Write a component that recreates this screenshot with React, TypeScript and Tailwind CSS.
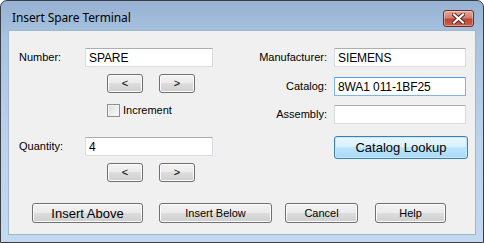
import React from "react";

const ui = "font-['Liberation_Sans',Arial,sans-serif] text-[11px] text-black";

function TextBox({ value, focused }: { value?: string; focused?: boolean }) {
  return (
    <div
      className={`h-[19px] w-full bg-white border px-[3px] flex items-center leading-none ${
        focused
          ? "border-[#7eb4ea] border-t-[#569de5]"
          : "border-[#d9dde3] border-t-[#abadb3]"
      }`}
    >
      <span className="text-[12px] tracking-[-0.1px]">{value}</span>
    </div>
  );
}

function WinButton({
  children,
  className = "",
  big,
}: {
  children: React.ReactNode;
  className?: string;
  big?: boolean;
}) {
  return (
    <div
      className={`flex items-center justify-center rounded-[3px] border border-[#707070] bg-[linear-gradient(to_bottom,#f2f2f2_0%,#ebebeb_50%,#dddddd_50%,#cfcfcf_100%)] shadow-[inset_0_0_0_1px_#fcfcfc] leading-none ${
        big ? "text-[13px]" : "text-[11px]"
      } ${className}`}
    >
      {children}
    </div>
  );
}

function ArrowPair() {
  return (
    <div className="flex gap-[16px] pl-[22px]">
      <WinButton className="w-[36px] h-[19px]">&lt;</WinButton>
      <WinButton className="w-[36px] h-[19px]">&gt;</WinButton>
    </div>
  );
}

function CloseButton() {
  return (
    <div className="w-[31px] h-[17px] rounded-[3px] border border-[#6b2e26] bg-[linear-gradient(to_bottom,#e3a89d_0%,#d27f70_45%,#bf4433_55%,#c8604c_100%)] shadow-[inset_0_0_0_1px_rgba(255,255,255,0.35)] flex items-center justify-center">
      <svg width="13" height="11" viewBox="0 0 13 11">
        <path
          d="M2 1.5 L11 9.5 M11 1.5 L2 9.5"
          stroke="#5a1d16"
          strokeWidth="4"
          strokeLinecap="square"
        />
        <path
          d="M2 1.5 L11 9.5 M11 1.5 L2 9.5"
          stroke="#ffffff"
          strokeWidth="2.2"
          strokeLinecap="square"
        />
      </svg>
    </div>
  );
}

export default function App() {
  return (
    <div className="w-[484px] h-[243px] bg-white">
      <div className="w-[484px] h-[243px] flex flex-col rounded-t-[7px] border border-[#3a3f46] bg-[linear-gradient(to_bottom,#97b2d2_0%,#a9c3e0_15%,#bcd3ec_60%,#c3d9f0_100%)]">
        {/* title bar */}
        <div className="h-[29px] flex items-start justify-between pl-[11px] pr-[9px]">
          <span className="mt-[8px] text-[12px] font-['Noto_Sans',sans-serif] text-black tracking-[-0.1px]">
            Insert Spare Terminal
          </span>
          <div className="mt-[9px]">
            <CloseButton />
          </div>
        </div>

        {/* client area */}
        <div className="flex-1 px-[7px] pb-[7px]">
          <div className={`h-full border border-[#9fb6cf] bg-[#f0f0f0] ${ui}`}>
            <div className="flex">
              {/* left column */}
              <div className="w-[245px] pl-[10px] pt-[17px]">
                <div className="flex items-center">
                  <span className="w-[66px]">Number:</span>
                  <div className="w-[128px]">
                    <TextBox value="SPARE" />
                  </div>
                </div>
                <div className="mt-[7px] pl-[66px]">
                  <ArrowPair />
                </div>
                <div className="mt-[11px] h-[13px] pl-[88px] flex items-center gap-[3px] leading-none">
                  <div className="w-[13px] h-[13px] border border-[#8e8f8f] bg-[linear-gradient(135deg,#dcdcdc,#fbfbfb)] shadow-[inset_0_0_0_1px_#f4f4f4]" />
                  <span>Increment</span>
                </div>
                <div className="mt-[20px] flex items-center">
                  <span className="w-[66px]">Quantity:</span>
                  <div className="w-[128px]">
                    <TextBox value="4" />
                  </div>
                </div>
                <div className="mt-[7px] pl-[66px]">
                  <ArrowPair />
                </div>
              </div>

              {/* right column */}
              <div className="pt-[17px]">
                <div className="flex items-center">
                  <span className="w-[80px] pr-[7px] text-right">Manufacturer:</span>
                  <div className="w-[132px]">
                    <TextBox value="SIEMENS" />
                  </div>
                </div>
                <div className="mt-[10px] flex items-center">
                  <span className="w-[80px] pr-[7px] text-right">Catalog:</span>
                  <div className="w-[132px]">
                    <TextBox value="8WA1 011-1BF25" focused />
                  </div>
                </div>
                <div className="mt-[9px] flex items-center">
                  <span className="w-[80px] pr-[7px] text-right">Assembly:</span>
                  <div className="w-[132px]">
                    <TextBox />
                  </div>
                </div>
                <div className="mt-[12px] pl-[80px]">
                  <div className="w-[134px] h-[23px] rounded-[3px] border border-[#3c7fb1] bg-[linear-gradient(to_bottom,#eaf6fd_0%,#d9f0fc_50%,#bee6fd_50%,#a7d9f5_100%)] shadow-[inset_0_0_0_1px_#c6e8fb] flex items-center justify-center text-[13px] leading-none">
                    Catalog Lookup
                  </div>
                </div>
              </div>
            </div>

            {/* bottom buttons */}
            <div className="mt-[21px] flex pl-[23px]">
              <WinButton big className="w-[111px] h-[20px]">
                Insert Above
              </WinButton>
              <WinButton className="ml-[16px] w-[113px] h-[20px]">
                Insert Below
              </WinButton>
              <WinButton className="ml-[13px] w-[73px] h-[20px]">
                Cancel
              </WinButton>
              <WinButton className="ml-[17px] w-[71px] h-[20px]">
                Help
              </WinButton>
            </div>
          </div>
        </div>
      </div>
    </div>
  );
}
